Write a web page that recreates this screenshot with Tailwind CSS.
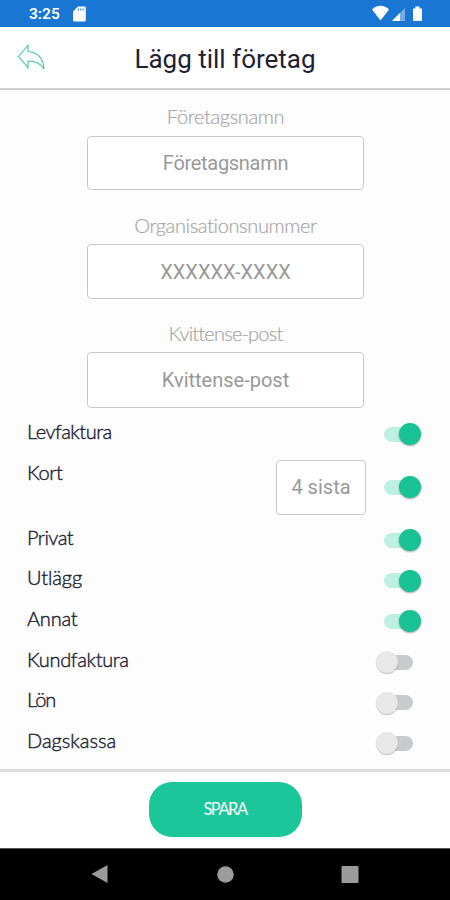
<!DOCTYPE html>
<html lang="sv">
<head>
    <meta charset="UTF-8">
    <meta name="viewport" content="width=device-width, initial-scale=1.0">
    <title>Lägg till företag</title>
    <script src="https://cdn.jsdelivr.net/npm/@tailwindcss/browser@4"></script>
</head>
<body class="w-[450px] h-[900px] flex flex-col overflow-hidden bg-[#fdfdfd] font-[Lato,sans-serif] text-[#1c2233]">

    <!-- Statusrad -->
    <div class="h-[27px] shrink-0 bg-[#1976d2] flex items-center pl-[29px] pr-[27px] text-white">
        <span class="w-[44px] font-[Roboto,sans-serif] font-semibold text-[15.5px] leading-none pt-[2px]">3:25</span>
        <svg class="w-[13px] h-[16px]" viewBox="0 0 13 16" fill="currentColor"><path fill-rule="evenodd" d="M5 .5h6.500a1.300 1.300 0 0 1 1.300 1.300v12.200a1.500 1.500 0 0 1-1.500 1.500H1.500A1.500 1.500 0 0 1 0 14V5.500zM5 2.500v2h1v-2zm2.300 0v2h1v-2zm2.300 0v2h1v-2z"/></svg>
        <svg class="ml-auto w-[51px] h-[17px]" viewBox="0 0 51 17" fill="currentColor">
            <path d="M0 4.500C5-.5 12-.5 17 4.500L8.500 15.500z"/>
            <path d="M33 3v13H20z" opacity=".4"/>
            <path d="M28 8v8h-8z"/>
            <path d="M41 3.500h2.300V1.500h4.200v2h2.500V15a1 1 0 0 1-1 1h-7a1 1 0 0 1-1-1z"/>
        </svg>
    </div>

    <!-- Sidhuvud -->
    <header class="relative h-[63px] shrink-0 bg-white border-b-2 border-[#cfcfcf] flex items-center justify-center">
        <svg class="absolute left-[17px] top-[17px] w-[29px] h-[27px]" viewBox="0 0 29 27" fill="none" stroke="#3fc79a" stroke-width="1.100"><path d="M1.500 12.500 11 1.500V7.500C19 8 26.500 13 27 25C23.500 19 18 17 11 17V23.500z"/></svg>
        <h1 class="font-[Roboto,sans-serif] text-[26px] leading-none pt-[3px]">Lägg till företag</h1>
    </header>

    <main class="grow flex flex-col">
        <div class="flex flex-col items-center pl-px text-[20px] text-[#a6a6a6]">
            <label class="h-[46px] pt-[14px] leading-6 font-light tracking-[-0.35px] [-webkit-text-stroke:0.2px]">Företagsnamn</label>
            <input type="text" placeholder="Företagsnamn" class="w-[277px] h-[54px] bg-white border border-[#c8c8c8] rounded-[4px] text-center font-[Roboto,sans-serif] tracking-[-0.3px] placeholder:text-[#999]">
            <label class="h-[54px] pt-[23px] leading-6 font-light tracking-[-0.35px] [-webkit-text-stroke:0.2px]">Organisationsnummer</label>
            <input type="text" placeholder="XXXXXX-XXXX" class="w-[277px] h-[55px] bg-white border border-[#c8c8c8] rounded-[4px] text-center font-[Roboto,sans-serif] placeholder:text-[#999]">
            <label class="h-[53px] pt-[22px] leading-6 font-light tracking-[-0.8px] [-webkit-text-stroke:0.2px]">Kvittense-post</label>
            <input type="text" placeholder="Kvittense-post" class="w-[277px] h-[56px] bg-white border border-[#c8c8c8] rounded-[4px] text-center font-[Roboto,sans-serif] placeholder:text-[#999]">
        </div>

        <!-- Betalsätt, fylls av skriptet -->
        <div id="betalsatt" class="pt-[6px] pl-[27px] pr-[29px] text-[20px]"></div>
    </main>

    <footer class="h-[79px] shrink-0 bg-white border-t-[3px] border-[#dedede] flex justify-center pt-[10px]">
        <button class="w-[153px] h-[55px] rounded-[23px] bg-[#1ac69a] text-white text-[16.5px] tracking-[-1.5px]">SPARA</button>
    </footer>

    <!-- Navigeringsrad -->
    <nav class="h-[52px] shrink-0 bg-black border-t border-[#555]">
        <svg class="w-[450px] h-[51px]" viewBox="0 849 450 51" fill="#9b9b9b">
            <path d="M91.500 874 107.500 865v18z"/>
            <circle cx="225.500" cy="874.500" r="8.300"/>
            <rect x="341.500" y="866" width="17" height="17" rx="1"/>
        </svg>
    </nav>

    <script>
        // spar = teckenavstånd för radens namn
        const rader = [
            { namn: 'Levfaktura', pa: true, spar: '-0.5px' },
            { namn: 'Kort', pa: true, spar: '-0.4px', kort: true },
            { namn: 'Privat', pa: true, spar: '-0.5px' },
            { namn: 'Utlägg', pa: true, spar: '-0.1px' },
            { namn: 'Annat', pa: true, spar: '-0.2px' },
            { namn: 'Kundfaktura', pa: false, spar: '-0.35px' },
            { namn: 'Lön', pa: false, spar: '-1px' },
            { namn: 'Dagskassa', pa: false, spar: '0px' }
        ];

        const knappPa = `
            <span class="relative w-[37px] h-[22px] flex items-center">
                <span class="w-[30px] h-[15px] rounded-full bg-[#bdf0e0]"></span>
                <span class="absolute right-0 top-0 size-[22px] rounded-full bg-[#18c294] shadow-[0_1px_2px_rgba(0,0,0,0.35)]"></span>
            </span>`;

        const knappAv = `
            <span class="relative w-[37px] h-[22px] mr-[8px] flex items-center justify-end">
                <span class="w-[30px] h-[15px] rounded-full bg-[#c9cacc]"></span>
                <span class="absolute left-0 top-0 size-[22px] rounded-full bg-[#e8e8e8] shadow-[0_1px_1px_rgba(0,0,0,0.25)]"></span>
            </span>`;

        document.getElementById('betalsatt').innerHTML = rader.map(rad => `
            <div class="flex items-center ${rad.kort ? 'h-[65px]' : 'h-[40.7px]'}">
                <span class="self-start pt-[5px] leading-6 font-light [-webkit-text-stroke:0.4px]" style="letter-spacing:${rad.spar}">${rad.namn}</span>
                <span class="ml-auto flex items-center">
                    ${rad.kort ? '<input type="text" placeholder="4 sista" class="w-[90px] h-[55px] mr-[18px] bg-white border border-[#c8c8c8] rounded-[4px] text-center font-[Roboto,sans-serif] placeholder:text-[#999]">' : ''}
                    ${rad.pa ? knappPa : knappAv}
                </span>
            </div>
        `).join('');
    </script>
</body>
</html>
